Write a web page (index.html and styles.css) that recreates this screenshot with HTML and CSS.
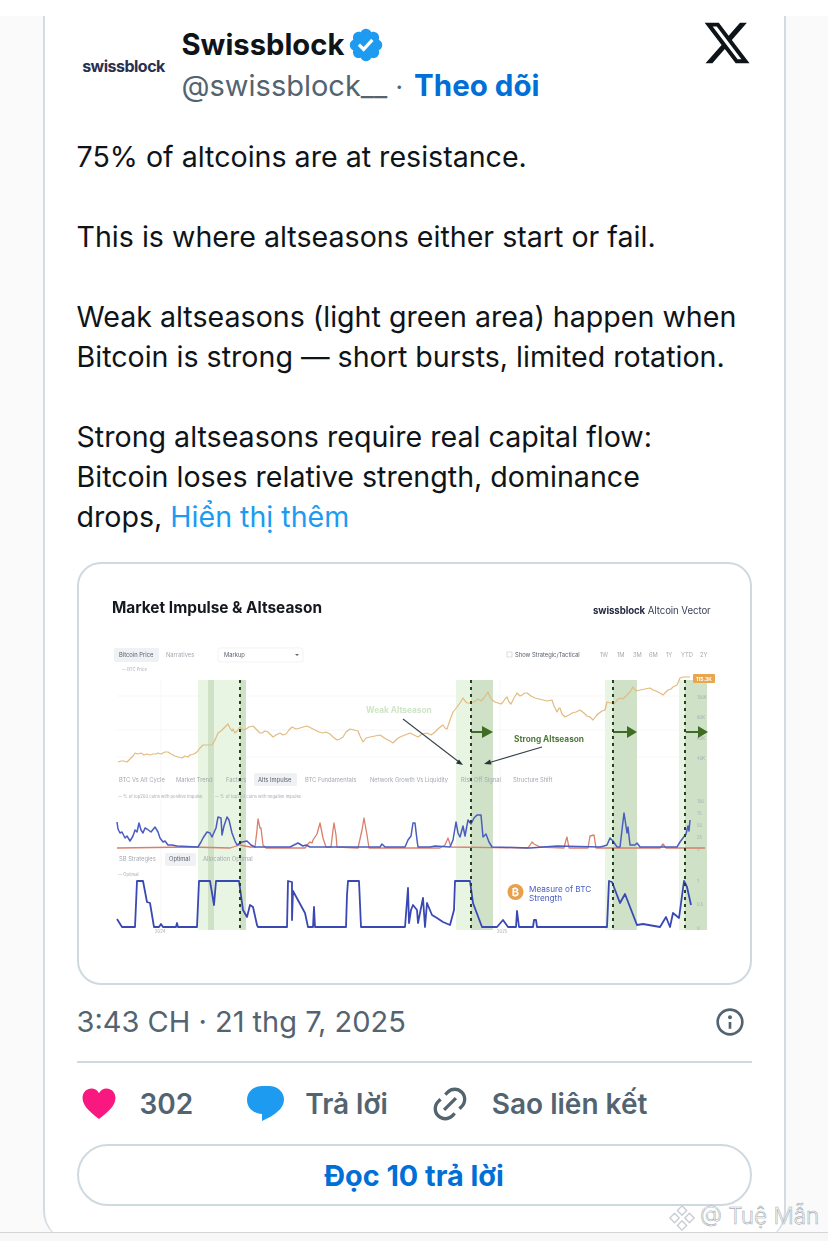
FILE: index.html
```html
<!DOCTYPE html>
<html lang="vi">
<head>
<meta charset="utf-8">
<title>Swissblock</title>
<link rel="stylesheet" href="styles.css">
</head>
<body>
<div class="topbar"></div>
<main class="card">
  <header class="head">
    <div class="avatar"><span>swissblock</span></div>
    <div class="who">
      <div class="name">Swissblock
        <svg class="badge" viewBox="0 0 22 22"><path fill="#1d9bf0" d="M20.396 11c-.018-.646-.215-1.275-.57-1.816-.354-.54-.852-.972-1.438-1.246.223-.607.27-1.264.14-1.897-.131-.634-.437-1.218-.882-1.687-.47-.445-1.053-.75-1.687-.882-.633-.13-1.29-.083-1.897.14-.273-.587-.704-1.086-1.245-1.44S11.647 1.62 11 1.604c-.646.017-1.273.213-1.813.568s-.969.854-1.24 1.44c-.608-.223-1.267-.272-1.902-.14-.635.13-1.22.436-1.69.882-.445.47-.749 1.055-.878 1.688-.13.633-.08 1.29.144 1.896-.587.274-1.087.705-1.443 1.245-.356.54-.555 1.17-.574 1.817.02.647.218 1.276.574 1.817.356.54.856.972 1.443 1.245-.224.606-.274 1.263-.144 1.896.13.634.433 1.218.877 1.688.47.443 1.054.747 1.687.878.633.132 1.29.084 1.897-.136.274.586.705 1.084 1.246 1.439.54.354 1.17.551 1.816.569.647-.016 1.276-.213 1.817-.567s.972-.854 1.245-1.44c.604.239 1.266.296 1.903.164.636-.132 1.22-.447 1.68-.907.46-.46.776-1.044.908-1.681s.075-1.299-.165-1.903c.586-.274 1.084-.705 1.439-1.246.354-.54.551-1.17.569-1.816z"/><path fill="#fff" d="M9.662 14.85l-3.429-3.428 1.293-1.302 2.072 2.072 4.4-4.794 1.347 1.246z"/></svg>
      </div>
      <div class="handle">@swissblock__ <span class="dot">·</span> <a class="follow">Theo dõi</a></div>
    </div>
    <svg class="xlogo" viewBox="0 0 24 24"><path fill="#0f1419" d="M18.244 2.25h3.308l-7.227 8.26 8.502 11.24H16.17l-5.214-6.817L4.99 21.75H1.68l7.73-8.835L1.254 2.25H8.08l4.713 6.231zm-1.161 17.52h1.833L7.084 4.126H5.117z"/></svg>
  </header>

  <div class="body">
    <p>75% of altcoins are at resistance.</p>
    <p>This is where altseasons either start or fail.</p>
    <p>Weak altseasons (light green area) happen when<br>Bitcoin is strong — short bursts, limited rotation.</p>
    <p>Strong altseasons require real capital flow:<br>Bitcoin loses relative strength, dominance<br>drops, <a class="more">Hiển thị thêm</a></p>
  </div>

  <figure class="media">
    <svg class="chart" viewBox="77 562 675 423">
      <text class="c-title" x="112" y="613">Market Impulse &amp; Altseason</text>
      <text class="c-brand" x="593" y="614"><tspan class="b">swissblock</tspan> Altcoin Vector</text>

      <rect class="pill" x="114" y="648" width="45" height="14" rx="2"/>
      <text class="c-s dk" x="119" y="657">Bitcoin Price</text>
      <text class="c-s" x="166" y="657">Narratives</text>
      <rect class="select" x="218" y="648" width="85" height="14" rx="2"/>
      <text class="c-s dk" x="224" y="657">Markup</text>
      <path d="M295 654l2 2 2-2z" fill="#667"/>
      <rect x="507" y="652" width="5" height="5" fill="none" stroke="#bbb" stroke-width=".5"/>
      <text class="c-s dk" x="515" y="657">Show Strategic/Tactical</text>
      <text class="c-s" x="600" y="657">1W</text><text class="c-s" x="617" y="657">1M</text><text class="c-s" x="633" y="657">3M</text><text class="c-s" x="649" y="657">6M</text><text class="c-s" x="666" y="657">1Y</text><text class="c-s" x="681" y="657">YTD</text><text class="c-s" x="700" y="657">2Y</text>
      <text class="c-xs" x="122" y="671">— BTC Price</text>

      <g class="grid"><path d="M117 696H695M117 730H695M117 757H695M161 680V930M500 680V930"/></g>

      <g class="bands-l">
        <rect x="198" y="680" width="48" height="250"/><rect x="456" y="680" width="37" height="250"/>
        <rect x="605" y="680" width="32" height="250"/><rect x="679" y="680" width="28" height="250"/>
      </g>
      <g class="bands-d">
        <rect x="208" y="680" width="6" height="250"/><rect x="240" y="680" width="6" height="250"/>
        <rect x="471" y="680" width="22" height="250"/><rect x="613" y="680" width="24" height="250"/>
        <rect x="685" y="680" width="22" height="250"/>
      </g>

      <polyline class="price" points="118,762 121,761 124,761 127,762 130,759 133,756 135,753 138,754 141,753 144,755 147,754 150,755 153,754 156,754 158,753 161,754 165,752 168,752 171,754 175,756 178,757 182,758 185,756 188,757 190,755 194,754 197,752 200,748 203,745 208,745 212,745 215,740 218,733 221,731 223,729 226,726 228,724 230,728 232,731 233,729 235,733 237,731 240,727 243,730 246,729 249,727 253,726 256,729 258,731 260,733 262,733 265,731 268,732 271,735 273,737 276,735 280,733 283,735 286,734 289,730 292,727 296,729 300,728 303,727 307,726 311,728 315,730 319,732 323,733 326,732 330,734 333,737 337,740 340,739 343,737 346,732 350,729 354,730 358,731 360,736 363,742 366,738 370,737 375,736 380,735 383,737 386,739 390,741 393,743 397,739 400,737 405,735 410,733 414,735 418,737 422,734 427,733 431,735 435,732 439,728 443,725 445,728 447,729 450,720 453,712 457,707 460,703 463,698 465,701 467,703 470,703 474,702 478,699 481,701 484,698 486,695 488,692 490,697 492,700 495,702 498,703 501,704 503,702 505,699 507,697 509,702 511,704 514,698 517,693 520,696 522,695 525,693 527,693 531,696 535,698 539,699 543,700 547,701 552,700 554,706 557,712 559,708 560,708 562,714 565,717 569,715 572,713 576,712 580,710 584,713 587,716 590,717 593,720 596,716 598,714 602,711 605,710 607,702 611,703 614,704 617,700 620,698 623,699 626,696 630,692 633,687 636,691 640,690 645,689 650,688 653,690 656,691 660,693 663,695 666,692 668,690 671,689 673,687 677,685 680,678 683,677 686,677 690,677"/>

      <g class="tag"><rect x="693" y="674" width="22" height="9" rx="1"/><text x="696" y="681">115.3K</text></g>
      <text class="c-xs" x="697" y="699">100K</text><text class="c-xs" x="697" y="719">80K</text><text class="c-xs" x="697" y="740">60K</text><text class="c-xs" x="697" y="760">40K</text>

      <text class="weak" x="366" y="713">Weak Altseason</text>
      <text class="strong" x="514" y="742">Strong Altseason</text>
      <path class="ar-blk" d="M403 719L459 762"/><path d="M463 765l-7-1.500 3-4z" fill="#2a333a"/>
      <path class="ar-blk" d="M542 747L488 763"/><path d="M484 764l6-4.500 1.500 5z" fill="#2a333a"/>

      <g class="ar-grn">
        <path d="M471 732H483M613 732H627M686 732H698"/>
      </g>
      <g fill="#3f6d23"><path d="M482 726l11 6-11 6zM627 726l10 6-10 6zM698 726l10 6-10 6z"/></g>

      <g class="tabs">
        <rect class="pill" x="254" y="773" width="43" height="13" rx="2"/>
        <text class="c-s" x="119" y="782">BTC Vs Alt Cycle</text><text class="c-s" x="176" y="782">Market Trend</text><text class="c-s" x="226" y="782">Factors</text>
        <text class="c-s dk" x="258" y="782">Alts Impulse</text><text class="c-s" x="305" y="782">BTC Fundamentals</text><text class="c-s" x="370" y="782">Network Growth Vs Liquidity</text>
        <text class="c-s" x="461" y="782">Risk Off Signal</text><text class="c-s" x="513" y="782">Structure Shift</text>
        <text class="c-xs" x="118" y="798">— % of top200 coins with positive impulse</text>
        <text class="c-xs" x="215" y="798">— % of top200 coins with negative impulse</text>
      </g>

      <polyline class="red" points="117,848 190,847 230,848 240,845 250,847 255,847 257,830 258,819 260,828 261,828 263,845 266,848 305,848 308,844 310,842 312,843 313,840 317,834 320,823 323,838 326,847 331,847 333,830 334,823 336,835 337,847 358,848 362,830 364,818 367,835 369,848 440,848 445,845 448,838 451,847 528,848 532,842 534,844 540,847 564,848 566,840 567,837 569,848 588,848 590,836 594,835 596,848 660,848 663,844 666,848 705,848"/>
      <polyline class="blue" points="117,822 118,829 120,833 122,832 125,838 127,836 130,841 133,836 135,830 137,832 139,823 141,830 143,833 145,828 147,829 151,832 155,827 158,832 160,838 163,842 165,841 168,845 172,845 177,846 198,847 201,842 203,838 207,832 210,833 212,837 216,828 218,817 221,818 222,835 224,826 227,817 229,820 232,833 235,841 237,845 242,842 247,841 251,845 255,847 290,847 294,845 298,843 303,846 306,845 310,847 380,847 382,844 385,847 405,847 408,840 411,836 413,823 415,823 417,840 418,847 430,847 435,846 450,847 453,840 456,822 458,833 460,837 463,826 465,836 468,820 471,824 474,818 477,815 481,815 482,826 483,837 486,834 489,842 492,847 530,848 557,846 600,847 604,846 607,845 610,838 613,841 617,847 620,847 622,830 624,813 626,826 627,833 628,827 630,845 635,845 637,843 640,847 677,847 680,842 683,838 686,834 688,826 689,831 690,820"/>
      <text class="c-xs" x="697" y="803">100</text><text class="c-xs" x="697" y="815">75</text><text class="c-xs" x="697" y="827">50</text><text class="c-xs" x="697" y="839">25</text><text class="c-xs" x="697" y="851">0</text>

      <rect class="pill" x="165" y="853" width="31" height="13" rx="2"/>
      <text class="c-s" x="119" y="861">SB Strategies</text><text class="c-s dk" x="169" y="861">Optimal</text><text class="c-s" x="203" y="861">Allocation Optimal</text>
      <text class="c-xs" x="118" y="876">— Optimal</text>

      <polyline class="opt" points="117,919 122,927 135,927 137,881 143,881 147,902 150,903 154,927 159,927 161,924 163,927 176,927 177,923 178,927 197,927 199,881 210,881 214,905 216,881 239,881 243,910 247,917 250,905 253,907 257,925 258,927 287,927 288,881 292,882 292,920 293,891 305,913 308,927 313,927 314,907 315,927 346,927 347,895 348,881 359,881 361,927 405,927 408,888 409,923 411,910 413,905 417,910 418,923 423,898 425,927 427,903 432,915 437,918 443,922 450,925 454,910 455,881 470,881 473,903 482,927 497,927 503,920 508,927 516,927 517,911 519,927 533,927 534,920 536,920 537,927 607,927 609,881 612,882 620,903 625,894 637,925 643,924 660,927 666,917 670,927 673,913 679,918 684,881 687,887 691,905"/>
      <text class="c-xs" x="697" y="883">1</text><text class="c-xs" x="697" y="906">0.5</text><text class="c-xs" x="697" y="930">0</text>
      <text class="c-xs" x="155" y="933">2024</text><text class="c-xs" x="497" y="933">2025</text>

      <circle cx="515.500" cy="892" r="8" fill="#e8a04a"/>
      <text class="btc" x="515.500" y="896">₿</text>
      <text class="measure" x="529" y="892">Measure of BTC</text>
      <text class="measure" x="529" y="901">Strength</text>

      <g class="dots"><path d="M240 680V930M471 680V930M613 680V930M685 680V930"/></g>
    </svg>
  </figure>

  <div class="meta">
    <span>3:43 CH · 21 thg 7, 2025</span>
    <svg class="info" viewBox="0 0 24 24"><path fill="#536471" d="M13.500 8.500c0 .83-.67 1.500-1.500 1.500s-1.500-.67-1.500-1.500S11.170 7 12 7s1.500.67 1.500 1.500zM13 17v-5h-2v5h2zm-1 5.250c5.660 0 10.250-4.590 10.250-10.250S17.660 1.750 12 1.750 1.750 6.340 1.750 12 6.340 22.250 12 22.250zM20.250 12c0 4.560-3.690 8.250-8.250 8.250S3.750 16.560 3.750 12 7.440 3.750 12 3.750 20.250 7.440 20.250 12z"/></svg>
  </div>

  <div class="actions">
    <div class="act act-like">
      <svg class="i-heart" viewBox="0 0 36 34"><path fill="#f91880" d="M18 33C11 27 .5 20 .5 10.500 .5 4.500 5 .5 10 .5c3.500 0 6.500 1.800 8 5 1.500-3.200 4.500-5 8-5 5 0 9.500 4 9.500 10C35.500 20 25 27 18 33z"/></svg>
      <span>302</span>
    </div>
    <div class="act act-reply">
      <svg class="i-bubble" viewBox="0 0 37 35"><path fill="#1d9bf0" d="M15 0h7c8.500 0 15 6 15 13.500 0 7.500-6 12.500-13 17L15 35v-7C6 27.500 0 21.500 0 14 0 6 6.500 0 15 0z"/></svg>
      <span>Trả lời</span>
    </div>
    <div class="act act-link">
      <svg class="i-link" viewBox="0 0 24 24"><path fill="#536471" d="M18.360 5.640c-1.950-1.960-5.110-1.960-7.070 0L9.880 7.050 8.460 5.640l1.420-1.420c2.730-2.730 7.160-2.730 9.900 0 2.730 2.740 2.730 7.170 0 9.900l-1.420 1.420-1.410-1.420 1.410-1.410c1.960-1.960 1.960-5.120 0-7.070zm-2.120 3.530l-7.070 7.070-1.410-1.410 7.070-7.070 1.410 1.410zm-12.020.71l1.420-1.420 1.410 1.420-1.410 1.410c-1.960 1.960-1.960 5.120 0 7.070 1.950 1.960 5.110 1.960 7.070 0l1.410-1.410 1.420 1.410-1.420 1.420c-2.730 2.730-7.160 2.730-9.900 0-2.730-2.740-2.730-7.170 0-9.900z"/></svg>
      <span>Sao liên kết</span>
    </div>
  </div>

  <a class="cta">Đọc 10 trả lời</a>
</main>
<div class="bottom"></div>
<div class="watermark">
  <svg class="wm-ic" viewBox="0 0 30 30"><g fill="none" stroke="#c9ced3" stroke-width="1.500"><path d="M15 2l5 5-5 5-5-5zM7 10l5 5-5 5-5-5zM23 10l5 5-5 5-5-5zM15 18l5 5-5 5-5-5z"/></g></svg>
  <span>@ Tuệ Mẫn</span>
</div>
</body>
</html>
```

FILE: styles.css
```css
* { box-sizing: border-box; }
html, body { margin: 0; padding: 0; }
body {
  width: 828px;
  height: 1241px;
  overflow: hidden;
  position: relative;
  background: #fafafa;
  font-family: Inter, "Noto Sans", sans-serif;
  color: #0f1419;
}
.topbar { height: 16px; background: #fff; }
.card {
  width: 743px;
  height: 1225px;
  margin-left: 43px;
  padding: 0 32px 0 31.500px;
  background: #fff;
  border: 2px solid #d3dce3;
  border-top: 0;
  border-bottom: 0;
  border-radius: 0 0 30px 30px;
  display: flex;
  flex-direction: column;
}
.head { display: flex; height: 121px; flex: none; position: relative; }
.avatar {
  width: 92px;
  height: 92px;
  margin: 4px 12px 0 1px;
  display: flex;
  align-items: center;
  justify-content: center;
  flex: none;
}
.avatar span { font-size: 16px; font-weight: 700; color: #2a3050; letter-spacing: -.5px; }
.who { padding-top: 9px; }
.name { font-size: 29.200px; font-weight: 700; line-height: 40px; height: 40px; display: flex; align-items: center; gap: 3px; }
.badge { width: 38px; height: 38px; }
.handle { font-size: 29px; line-height: 41px; color: #536471; white-space: nowrap; }
.dot { font-size: 26px; }
.follow { color: #006fd6; font-weight: 700; font-size: 29.500px; margin-left: 3px; }
.xlogo { position: absolute; right: 0; top: 2px; width: 50px; height: 50px; }
.body { font-size: 28.600px; line-height: 40px; flex: none; }
.body p { margin: 0 0 40px; white-space: nowrap; }
.body p:last-child { margin-bottom: 0; }
.more { color: #1d9bf0; }
.media {
  margin: 25px 0 0;
  flex: none;
  width: 675px;
  height: 423px;
  border: 2px solid #cfd9e0;
  border-radius: 24px;
  overflow: hidden;
  background: #fff;
  position: relative;
}
.chart { display: block; width: 675px; height: 423px; margin: -2px; filter: blur(.5px); font-family: Inter, sans-serif; }
.c-title { font-size: 15.400px; font-weight: 700; fill: #15181d; }
.c-brand { font-size: 9.700px; fill: #3b4254; letter-spacing: -.1px; }
.c-brand .b { font-weight: 700; fill: #262b45; }
.c-s { font-size: 5.800px; fill: #a3a9b2; }
.c-s.dk { fill: #59606e; }
.c-xs { font-size: 4.200px; fill: #a6abb3; }
.pill { fill: #eff1f5; }
.select { fill: #fff; stroke: #ececef; stroke-width: .7; }
.grid path { stroke: #f3f4f5; stroke-width: .7; fill: none; }
.bands-l rect { fill: #e8f5e2; }
.bands-d rect { fill: #cfe2c8; }
.price { fill: none; stroke: #e2bb80; stroke-width: 1.200; stroke-linejoin: round; }
.tag rect { fill: #e8a64f; }
.tag text { font-size: 5px; font-weight: 700; fill: #fff; }
.weak { font-size: 8.300px; font-weight: 700; fill: #cfe5c8; }
.strong { font-size: 8.300px; font-weight: 700; fill: #4f7a39; }
.ar-blk { stroke: #39434a; stroke-width: 1.100; fill: none; }
.ar-grn path { stroke: #3f6d23; stroke-width: 1.800; fill: none; }
.red { fill: none; stroke: #d97f6a; stroke-width: 1.300; stroke-linejoin: round; }
.blue { fill: none; stroke: #4a5cc0; stroke-width: 1.500; stroke-linejoin: round; }
.opt { fill: none; stroke: #3a48b4; stroke-width: 1.800; stroke-linejoin: round; }
.dots path { stroke: #27401f; stroke-width: 2; stroke-dasharray: 3 4; fill: none; }
.btc { font-size: 11px; font-weight: 700; fill: #fff; text-anchor: middle; }
.measure { font-size: 8.200px; fill: #4a5cc0; }
.meta {
  height: 78px;
  flex: none;
  padding-bottom: 3px;
  display: flex;
  align-items: center;
  justify-content: space-between;
  font-size: 29px;
  color: #536471;
  border-bottom: 2px solid #cfd9e0;
  width: 675px;
}
.info { width: 32px; height: 32px; margin-right: 6px; }
.actions { display: flex; height: 81px; flex: none; align-items: center; font-size: 28px; font-weight: 600; color: #536471; white-space: nowrap; }
.act { display: flex; align-items: center; }
.act-like { padding-left: 4px; gap: 23px; }
.act-reply { margin-left: 54px; gap: 21px; }
.act-link { margin-left: 44px; gap: 22px; }
.i-heart { width: 36px; height: 32px; }
.i-bubble { width: 37px; height: 35px; margin-top: 0; }
.i-link { width: 40px; height: 40px; margin-left: -2px; }
.cta {
  display: flex;
  flex: none;
  align-items: center;
  justify-content: center;
  width: 675px;
  height: 62px;
  border: 2px solid #cfd9e0;
  border-radius: 31px;
  font-size: 28.800px;
  font-weight: 700;
  color: #006fd6;
}
.bottom { position: absolute; left: 0; right: 0; top: 1232px; height: 9px; background: #f7f7f7; border-top: 1px solid #d5d5d5; }
.watermark {
  position: absolute;
  left: 668px;
  top: 1198px;
  display: flex;
  align-items: center;
  gap: 4px;
  font-size: 22.500px;
  font-weight: 300;
  color: rgba(255,255,255,.7);
  -webkit-text-stroke: .6px #a9aeb3;
  white-space: nowrap;
}
.wm-ic { width: 28px; height: 28px; margin-top: 6px; }
```
